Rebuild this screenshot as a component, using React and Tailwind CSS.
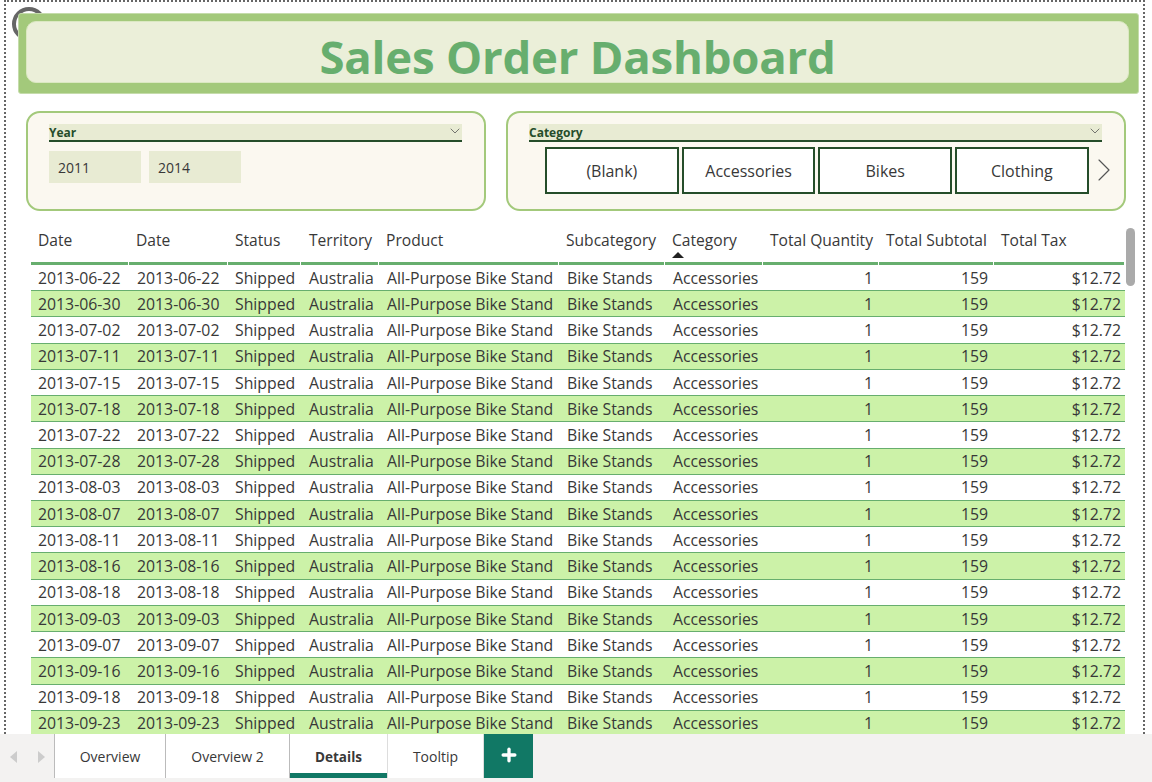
import { ChevronDown, ChevronRight, Plus } from 'lucide-react';

const dates = [
  '2013-06-22', '2013-06-30', '2013-07-02', '2013-07-11', '2013-07-15', '2013-07-18',
  '2013-07-22', '2013-07-28', '2013-08-03', '2013-08-07', '2013-08-11', '2013-08-16',
  '2013-08-18', '2013-09-03', '2013-09-07', '2013-09-16', '2013-09-18', '2013-09-23',
];
const headers = ['Date', 'Date', 'Status', 'Territory', 'Product', 'Subcategory', 'Category', 'Total Quantity', 'Total Subtotal', 'Total Tax'];
const gridCols = 'grid grid-cols-[98px_99px_73px_78px_180px_106px_98px_116px_115px_131px]';

const App = () => {
    return (
        <div className="h-screen flex flex-col overflow-hidden bg-white font-['Open_Sans',sans-serif] text-[#383838]">
            {/* Report canvas */}
            <div className="relative flex-1 min-h-0 overflow-hidden ml-1 mr-[7px] border-x-2 border-t-2 border-dotted border-[#666] pl-3 pr-1 pt-[11px]">
                <div className="absolute left-[6px] top-[5px] w-[34px] h-[34px] rounded-full border-4 border-[#666]"></div>

                {/* Title banner */}
                <div className="relative h-[81px] w-[1121px] rounded-[3px] bg-[#a3c97b] border border-[#c5dcab] pt-[7px] pl-[7px] pr-[9px] pb-[10px]">
                    <div className="h-full rounded-[10px] bg-[#ebefd9] border border-[#dbe8c2] flex items-center justify-center pt-[9px]">
                        <h1 className="text-[45.5px] font-bold leading-none text-[#67ae6e] tracking-[-0.2px]">Sales Order Dashboard</h1>
                    </div>
                </div>

                {/* Slicers */}
                <div className="flex gap-5 ml-2 mt-[17px]">
                    <div className="w-[460px] h-[100px] rounded-[14px] border-2 border-[#a3c97b] bg-[#fbf8f0] px-[21px] pt-[11px]">
                        <div className="h-[18px] w-[413px] bg-[#e8ebd3] border-b-2 border-[#254d2a] flex items-center justify-between text-xs font-bold text-[#254d2a] leading-none pt-[2px]">
                            Year
                            <ChevronDown size={16} strokeWidth={1.2} className="text-[#555] -mt-[5px] -mr-px" />
                        </div>
                        <div className="flex gap-2 mt-[9px]">
                            <div className="w-[92px] h-8 bg-[#e8ebd3] flex items-center pl-[9px] pt-[2px] text-sm">2011</div>
                            <div className="w-[92px] h-8 bg-[#e8ebd3] flex items-center pl-[9px] pt-[2px] text-sm">2014</div>
                        </div>
                    </div>
                    <div className="relative w-[620px] h-[100px] rounded-[14px] border-2 border-[#a3c97b] bg-[#fbf8f0] pl-[21px] pr-[22px] pt-[11px]">
                        <div className="h-[18px] bg-[#e8ebd3] border-b-2 border-[#254d2a] flex items-center justify-between text-xs font-bold text-[#254d2a] leading-none pt-[2px]">
                            Category
                            <ChevronDown size={16} strokeWidth={1.2} className="text-[#555] -mt-[5px] -mr-px" />
                        </div>
                        <div className="flex gap-[3px] mt-[5px] ml-4">
                            {['(Blank)', 'Accessories', 'Bikes', 'Clothing'].map((c) => (
                                <div key={c} className="w-[133.7px] h-[47px] bg-white border-2 border-[#254d2a] flex items-center justify-center text-base">{c}</div>
                            ))}
                        </div>
                        <ChevronRight size={40} strokeWidth={0.7} className="absolute right-0 top-[37px] text-[#555]" />
                    </div>
                </div>

                {/* Table */}
                <div className="relative ml-[13px] mt-[17px] w-[1094px]">
                    <div className={`${gridCols} h-[37px] text-[15.6px]`}>
                        {headers.map((h, i) => (
                            <div key={i} className={`relative mr-px border-b-[3px] border-[#67ae6e] pt-[1px] leading-[22px] whitespace-nowrap ${h === 'Territory' ? 'pl-2' : 'pl-[7px]'}`}>
                                {h}
                                {h === 'Category' && (
                                    <span className="absolute left-[2px] bottom-[4px] w-0 h-0 ml-[5px] border-x-[6px] border-x-transparent border-b-[6px] border-b-[#222]"></span>
                                )}
                            </div>
                        ))}
                    </div>
                    {dates.map((d, i) => (
                        <div key={i} className={`${gridCols} h-[26.23px] items-center whitespace-nowrap leading-none text-[15.8px] pt-[2px] border-b border-[#67ae6e] ${i % 2 === 1 ? 'bg-[#ccf2a8]' : 'bg-white'}`}>
                            <div className="pl-[7px]">{d}</div>
                            <div className="pl-2">{d}</div>
                            <div className="pl-[7px]">Shipped</div>
                            <div className="pl-2">Australia</div>
                            <div className="pl-2">All-Purpose Bike Stand</div>
                            <div className="pl-2">Bike Stands</div>
                            <div className="pl-2">Accessories</div>
                            <div className="text-right pr-[6px]">1</div>
                            <div className="text-right pr-[6px]">159</div>
                            <div className="text-right pr-[4px]">$12.72</div>
                        </div>
                    ))}
                    <div className="absolute -right-[10px] top-0 w-[9px] h-[58px] rounded-full bg-[#aaa]"></div>
                </div>
            </div>

            {/* Page tabs */}
            <div className="h-[48px] shrink-0 bg-[#f3f2f1] flex items-start text-sm">
                <div className="w-[54px] h-11 flex items-center justify-center gap-[21px] text-[#ccc] pt-[1px]">
                    <svg width="7" height="12" viewBox="0 0 7 12"><path d="M7 0 L0 6 L7 12 Z" fill="currentColor" /></svg>
                    <svg width="7" height="12" viewBox="0 0 7 12"><path d="M0 0 L7 6 L0 12 Z" fill="currentColor" /></svg>
                </div>
                <div className="w-[112px] h-11 bg-white border-x border-[#bbb] flex items-center justify-center pt-[2px]">Overview</div>
                <div className="w-[124px] h-11 bg-white border-r border-[#bbb] flex items-center justify-center pt-[2px]">Overview 2</div>
                <div className="w-[97px] h-11 bg-white border-b-[5px] border-[#117865] flex items-center justify-center font-bold text-[13.5px] pt-[9px]">Details</div>
                <div className="w-[97px] h-11 bg-white border-x border-[#ddd] flex items-center justify-center pt-[2px]">Tooltip</div>
                <div className="w-[49px] h-11 bg-[#117865] flex items-center justify-center text-white pb-[3px]">
                    <Plus size={20} strokeWidth={4} />
                </div>
            </div>
        </div>
    );
};

export default App;
